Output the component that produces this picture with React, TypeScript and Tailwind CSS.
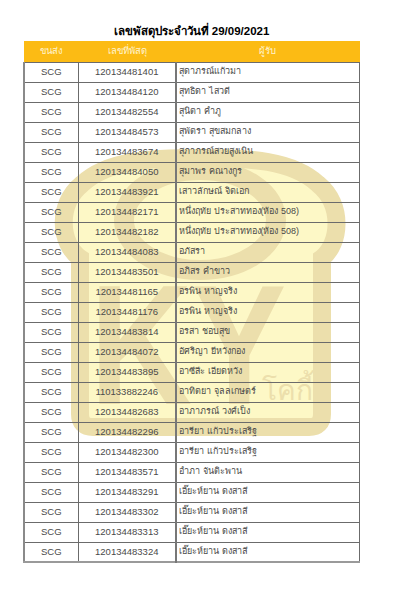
const rows = [
  { no: '120134481401', name: 'สุดาภรณ์แก้วมา' },
  { no: '120134484120', name: 'สุทธิดา ไสวดี' },
  { no: '120134482554', name: 'สุนิตา คำภู' },
  { no: '120134484573', name: 'สุพัตรา สุขสมกลาง' },
  { no: '120134483674', name: 'สุภาภรณ์สวยสูงเนิน' },
  { no: '120134484050', name: 'สุมาพร คณางกูร' },
  { no: '120134483921', name: 'เสาวลักษณ์ จิตเอก' },
  { no: '120134482171', name: 'หนึ่งฤทัย ประสาททอง(ห้อง 508)' },
  { no: '120134482182', name: 'หนึ่งฤทัย ประสาททอง(ห้อง 508)' },
  { no: '120134484083', name: 'อภัสรา' },
  { no: '120134483501', name: 'อภิสร คำขาว' },
  { no: '120134481165', name: 'อรพิน หาญจริง' },
  { no: '120134481176', name: 'อรพิน หาญจริง' },
  { no: '120134483814', name: 'อรสา ชอบสุข' },
  { no: '120134484072', name: 'อัศริญา ยีหวังกอง' },
  { no: '120134483895', name: 'อาซีสีะ เอียดหวัง' },
  { no: '110133882246', name: 'อาทิตยา จุลลเกษตร์' },
  { no: '120134482683', name: 'อาภาภรณ์ วงศ์เป็ง' },
  { no: '120134482296', name: 'อารียา แก้วประเสริฐ' },
  { no: '120134482300', name: 'อารียา แก้วประเสริฐ' },
  { no: '120134483571', name: 'อำภา จันติะพาน' },
  { no: '120134483291', name: 'เอี๊ยะห์ยาน ดงสาลี' },
  { no: '120134483302', name: 'เอี๊ยะห์ยาน ดงสาลี' },
  { no: '120134483313', name: 'เอี๊ยะห์ยาน ดงสาลี' },
  { no: '120134483324', name: 'เอี๊ยะห์ยาน ดงสาลี' },
];

// faint shop logo behind the table
function Watermark() {
  const beige = '#ecdfac';
  return (
    <svg className="absolute left-0 top-0" width="400" height="590" viewBox="0 0 400 590">
      <path
        d="M80 258 C60 244 56 205 82 184 C108 160 150 158 200 158 C250 158 292 160 318 184 C344 205 340 244 322 258 L322 414 Q322 427 309 427 L93 427 Q80 427 80 414 Z"
        fill="#fdf8c6"
        stroke={beige}
        strokeWidth="18"
      />
      <ellipse cx="200" cy="220" rx="76" ry="50" fill="none" stroke={beige} strokeWidth="20" />
      <text
        x="90"
        y="404"
        fill={beige}
        fontSize="170"
        fontWeight="700"
        fontFamily="'Liberation Sans', Arial, sans-serif"
        textLength="196"
        lengthAdjust="spacingAndGlyphs"
      >
        KY
      </text>
      <text x="262" y="400" fill={beige} fontSize="28" fontFamily="'Noto Sans', sans-serif">
        โคกี้
      </text>
    </svg>
  );
}

export default function App() {
  return (
    <div className="relative w-[400px] h-[590px] bg-white overflow-hidden">
      <Watermark />
      <div className="relative pt-[23px]">
        <h1 className="text-center ml-[23px] w-[337px] text-[11.5px] leading-[17px] font-bold text-black font-['Tahoma','Liberation_Sans',sans-serif]">
          เลขพัสดุประจำวันที่ 29/09/2021
        </h1>
        <table className="mt-[1px] ml-[23px] w-[337px] table-fixed border-collapse text-[9.5px] font-['Liberation_Sans',Arial,sans-serif]">
          <colgroup>
            <col className="w-[54px]" />
            <col className="w-[98px]" />
            <col />
          </colgroup>
          <thead>
            <tr className="h-[21px] bg-[#fcbb14] text-[#fff3cf]">
              <th className="font-normal text-center">ขนส่ง</th>
              <th className="font-normal text-center">เลขที่พัสดุ</th>
              <th className="font-normal text-center">ผู้รับ</th>
            </tr>
          </thead>
          <tbody className="text-[#4a4a4a] border-l-2 border-b-2 border-l-[#8a8a8a] border-b-[#9a9a9a]">
            {rows.map((r, i) => (
              <tr key={i} className="h-[20px]">
                <td className="border border-[#6b6b6b] text-center p-0">SCG</td>
                <td className="border border-[#6b6b6b] text-center p-0">{r.no}</td>
                <td className="border border-[#6b6b6b] border-l-2 border-l-[#777] pl-[2px] p-0 text-[9px] whitespace-nowrap">
                  {r.name}
                </td>
              </tr>
            ))}
          </tbody>
        </table>
      </div>
    </div>
  );
}
